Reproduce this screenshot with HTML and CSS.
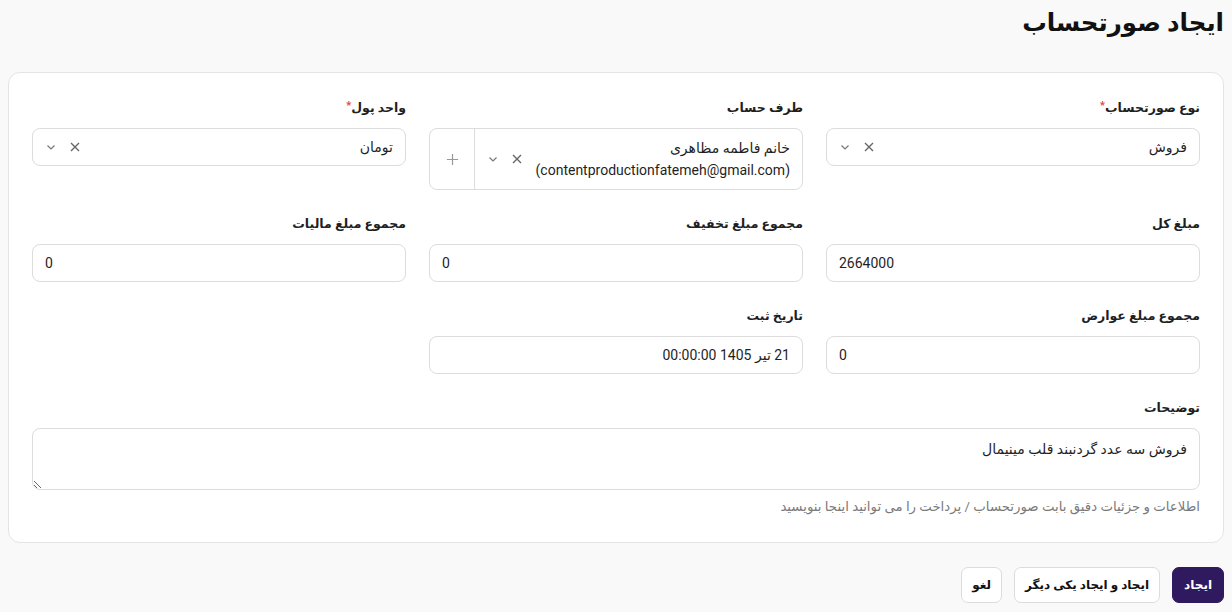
FILE: index.html
```html
<!DOCTYPE html>
<html lang="fa" dir="rtl">
<head>
    <meta charset="UTF-8">
    <meta name="viewport" content="width=device-width, initial-scale=1.0">
    <title>ایجاد صورتحساب</title>
    <link rel="stylesheet" href="styles.css">
</head>
<body>
    <h1 class="page-title">ایجاد صورتحساب</h1>

    <section class="card">
        <div class="form-grid">
            <div class="field">
                <label>نوع صورتحساب<span class="req">*</span></label>
                <div class="select">
                    <span class="select-value">فروش</span>
                    <span class="select-icons">
                        <svg class="icon-x" viewBox="0 0 12 12"><path d="M2 2l8 8M10 2l-8 8"/></svg>
                        <svg class="icon-chev" viewBox="0 0 12 12"><path d="M2.5 4.5l3.5 3.5 3.5-3.5"/></svg>
                    </span>
                </div>
            </div>
            <div class="field">
                <label>طرف حساب</label>
                <div class="select select-tall">
                    <span class="select-value">خانم فاطمه مظاهری <span class="ltr">(contentproductionfatemeh@gmail.com)</span></span>
                    <span class="select-icons">
                        <svg class="icon-x" viewBox="0 0 12 12"><path d="M2 2l8 8M10 2l-8 8"/></svg>
                        <svg class="icon-chev" viewBox="0 0 12 12"><path d="M2.5 4.5l3.5 3.5 3.5-3.5"/></svg>
                    </span>
                    <span class="select-add">
                        <svg viewBox="0 0 14 14"><path d="M7 1v12M1 7h12"/></svg>
                    </span>
                </div>
            </div>
            <div class="field">
                <label>واحد پول<span class="req">*</span></label>
                <div class="select">
                    <span class="select-value">تومان</span>
                    <span class="select-icons">
                        <svg class="icon-x" viewBox="0 0 12 12"><path d="M2 2l8 8M10 2l-8 8"/></svg>
                        <svg class="icon-chev" viewBox="0 0 12 12"><path d="M2.5 4.5l3.5 3.5 3.5-3.5"/></svg>
                    </span>
                </div>
            </div>

            <div class="field">
                <label>مبلغ کل</label>
                <input class="input ltr-input" type="text" value="2664000">
            </div>
            <div class="field">
                <label>مجموع مبلغ تخفیف</label>
                <input class="input ltr-input" type="text" value="0">
            </div>
            <div class="field">
                <label>مجموع مبلغ مالیات</label>
                <input class="input ltr-input" type="text" value="0">
            </div>

            <div class="field">
                <label>مجموع مبلغ عوارض</label>
                <input class="input ltr-input" type="text" value="0">
            </div>
            <div class="field">
                <label>تاریخ ثبت</label>
                <input class="input" type="text" value="21 تیر 1405 00:00:00">
            </div>

            <div class="field field-wide">
                <label>توضیحات</label>
                <textarea class="textarea">فروش سه عدد گردنبند قلب مینیمال</textarea>
                <p class="hint">اطلاعات و جزئیات دقیق بابت صورتحساب / پرداخت را می توانید اینجا بنویسید</p>
            </div>
        </div>
    </section>

    <div class="actions">
        <button class="btn btn-primary">ایجاد</button>
        <button class="btn">ایجاد و ایجاد یکی دیگر</button>
        <button class="btn">لغو</button>
    </div>
</body>
</html>
```

FILE: styles.css
```css
:root {
    --primary: #2f1a5f;
    --border: #dcdcdc;
    --text: #1f1f1f;
    --muted: #7a7a7a;
    --page-bg: #f9f9f9;
}

* {
    margin: 0;
    padding: 0;
    box-sizing: border-box;
    font-family: Roboto, "DejaVu Sans", sans-serif;
}

body {
    background-color: var(--page-bg);
    color: var(--text);
    padding: 0 8px;
}

.page-title {
    font-size: 24.5px;
    font-weight: bold;
    line-height: 44px;
    padding-top: 1px;
    height: 72px;
    color: #111;
}

.card {
    background: white;
    border: 1px solid #e4e4e4;
    border-radius: 12px;
    padding: 25px 23px 25px 23px;
}

.form-grid {
    display: grid;
    grid-template-columns: repeat(3, 1fr);
    column-gap: 23px;
    row-gap: 24px;
}

.field-wide {
    grid-column: 1 / -1;
}

.field label {
    display: block;
    font-size: 12.5px;
    font-weight: bold;
    line-height: 20px;
    margin-bottom: 10px;
}

.req {
    color: #e0443c;
    font-size: 11px;
    line-height: 0;
    vertical-align: 3px;
}

.input,
.select,
.textarea {
    width: 100%;
    border: 1px solid var(--border);
    border-radius: 8px;
    background: white;
    font-size: 14px;
    color: var(--text);
}

.input {
    height: 38px;
    padding: 0 12px;
    outline: none;
}

.ltr-input {
    direction: ltr;
}

.select {
    display: flex;
    align-items: center;
    min-height: 38px;
    padding-right: 12px;
}

.select-value {
    flex: 1;
    line-height: 22px;
}

.select-tall {
    min-height: 62px;
}

.select-tall .select-value {
    padding: 8px 0;
}

.ltr {
    unicode-bidi: isolate;
}

.select-icons {
    display: flex;
    align-items: center;
    gap: 12px;
    padding: 0 12px;
}

.icon-x {
    width: 12px;
    height: 12px;
    stroke: #666;
    stroke-width: 1.4;
    fill: none;
}

.icon-chev {
    width: 12px;
    height: 12px;
    stroke: #777;
    stroke-width: 1.2;
    fill: none;
}

.select-add {
    align-self: stretch;
    width: 45px;
    border-right: 1px solid var(--border);
    display: flex;
    align-items: center;
    justify-content: center;
}

.select-add svg {
    width: 13px;
    height: 13px;
    stroke: #999;
    stroke-width: 1.3;
    fill: none;
}

.textarea {
    display: block;
    height: 62px;
    padding: 10px 12px;
    resize: vertical;
    line-height: 20px;
    outline: none;
}

.hint {
    font-size: 13.3px;
    color: var(--muted);
    margin-top: 7px;
    line-height: 20px;
}

.actions {
    display: flex;
    gap: 12px;
    padding-top: 24px;
}

.btn {
    height: 36px;
    padding: 0 11px;
    border: 1px solid var(--border);
    border-radius: 7px;
    background: white;
    font-size: 12px;
    font-weight: bold;
    color: #111;
    cursor: pointer;
}

.btn + .btn {
    padding: 0 10px;
}

.btn-primary {
    background: var(--primary);
    border-color: var(--primary);
    color: white;
}
```
